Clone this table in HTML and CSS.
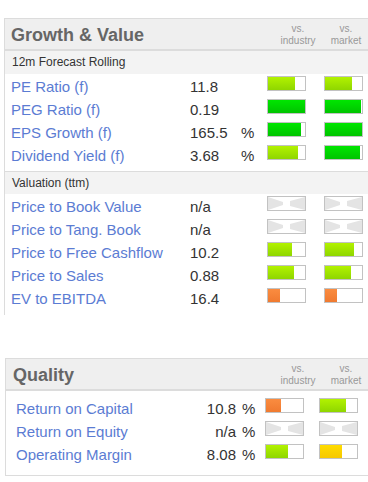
FILE: index.html
```html
<!DOCTYPE html>
<html>
<head>
<meta charset="utf-8">
<link rel="stylesheet" href="styles.css">
</head>
<body>
<div class="panel growth">
  <div class="phead">
    <h2>Growth &amp; Value</h2>
    <span class="vs">vs.<br>industry</span>
    <span class="vs">vs.<br>market</span>
  </div>
  <div class="sub sub-first">12m Forecast Rolling</div>
  <div class="rows">
    <div class="row"><span class="lbl">PE Ratio (f)</span><span class="val">11.8</span><span class="pct"></span><span class="bar"><i class="lime" style="width:73%"></i></span><span class="bar"><i class="lime" style="width:72%"></i></span></div>
    <div class="row"><span class="lbl">PEG Ratio (f)</span><span class="val">0.19</span><span class="pct"></span><span class="bar"><i class="green" style="width:100%"></i></span><span class="bar"><i class="green" style="width:98%"></i></span></div>
    <div class="row"><span class="lbl">EPS Growth (f)</span><span class="val">165.5</span><span class="pct">%</span><span class="bar"><i class="green" style="width:90%"></i></span><span class="bar"><i class="green" style="width:100%"></i></span></div>
    <div class="row"><span class="lbl">Dividend Yield (f)</span><span class="val">3.68</span><span class="pct">%</span><span class="bar"><i class="lime" style="width:81%"></i></span><span class="bar"><i class="green" style="width:94%"></i></span></div>
  </div>
  <div class="sub sub-line">Valuation (ttm)</div>
  <div class="rows">
    <div class="row"><span class="lbl">Price to Book Value</span><span class="val">n/a</span><span class="pct"></span><span class="bar na"><svg viewBox="0 0 37 13" width="37" height="13"><polygon points="0,0 15,5 15,8 0,13" /><polygon points="37,0 22,4 22,9 37,13" /></svg></span><span class="bar na"><svg viewBox="0 0 37 13" width="37" height="13"><polygon points="0,0 15,5 15,8 0,13" /><polygon points="37,0 22,4 22,9 37,13" /></svg></span></div>
    <div class="row"><span class="lbl">Price to Tang. Book</span><span class="val">n/a</span><span class="pct"></span><span class="bar na"><svg viewBox="0 0 37 13" width="37" height="13"><polygon points="0,0 15,5 15,8 0,13" /><polygon points="37,0 22,4 22,9 37,13" /></svg></span><span class="bar na"><svg viewBox="0 0 37 13" width="37" height="13"><polygon points="0,0 15,5 15,8 0,13" /><polygon points="37,0 22,4 22,9 37,13" /></svg></span></div>
    <div class="row"><span class="lbl">Price to Free Cashflow</span><span class="val">10.2</span><span class="pct"></span><span class="bar"><i class="lime" style="width:64%"></i></span><span class="bar"><i class="lime" style="width:79%"></i></span></div>
    <div class="row"><span class="lbl">Price to Sales</span><span class="val">0.88</span><span class="pct"></span><span class="bar"><i class="lime" style="width:70%"></i></span><span class="bar"><i class="lime" style="width:70%"></i></span></div>
    <div class="row"><span class="lbl">EV to EBITDA</span><span class="val">16.4</span><span class="pct"></span><span class="bar"><i class="orange" style="width:32%"></i></span><span class="bar"><i class="orange" style="width:33%"></i></span></div>
  </div>
</div>

<div class="panel quality">
  <div class="phead">
    <h2>Quality</h2>
    <span class="vs">vs.<br>industry</span>
    <span class="vs">vs.<br>market</span>
  </div>
  <div class="rows">
    <div class="row"><span class="lbl">Return on Capital</span><span class="val">10.8</span><span class="pct">%</span><span class="bar"><i class="orange" style="width:41%"></i></span><span class="bar"><i class="lime" style="width:70%"></i></span></div>
    <div class="row"><span class="lbl">Return on Equity</span><span class="val">n/a</span><span class="pct">%</span><span class="bar na"><svg viewBox="0 0 37 13" width="37" height="13"><polygon points="0,0 15,5 15,8 0,13" /><polygon points="37,0 22,4 22,9 37,13" /></svg></span><span class="bar na"><svg viewBox="0 0 37 13" width="37" height="13"><polygon points="0,0 15,5 15,8 0,13" /><polygon points="37,0 22,4 22,9 37,13" /></svg></span></div>
    <div class="row"><span class="lbl">Operating Margin</span><span class="val">8.08</span><span class="pct">%</span><span class="bar"><i class="lime" style="width:60%"></i></span><span class="bar"><i class="yellow" style="width:59%"></i></span></div>
  </div>
</div>
</body>
</html>
```
FILE: styles.css
```css
html, body {
  margin: 0;
  padding: 0;
  overflow: hidden;
  background: #fff;
}
body {
  width: 368px;
  height: 482px;
  font-family: "Liberation Sans", Arial, sans-serif;
  color: #333;
}
.panel {
  border: 1px solid #dcdcdc;
  border-right: none;
  box-sizing: content-box;
  width: 368px;
}
.growth {
  margin: 18px 0 0 4px;
  border-bottom: none;
  padding-bottom: 6px;
}
.quality {
  margin: 43px 0 0 5px;
  width: 367px;
  padding-bottom: 10px;
}
.phead {
  display: flex;
  align-items: flex-start;
  height: 30px;
  background: #efefef;
  border-bottom: 2px solid #dcdcdc;
  padding-right: 7px;
}
.phead h2 {
  flex: 1;
  margin: 0;
  font-size: 18px;
  line-height: 32px;
  font-weight: bold;
  color: #666;
  padding-left: 6px;
}
.quality .phead h2 {
  padding-left: 7px;
}
.vs {
  width: 40px;
  margin-top: 4px;
  font-size: 10px;
  line-height: 12px;
  color: #999;
  text-align: center;
}
.vs + .vs {
  margin-left: 8px;
}
.sub {
  height: 22px;
  background: #f3f3f3;
  font-size: 12px;
  line-height: 23px;
  padding-left: 7px;
  color: #333;
}
.sub-first {
  height: 23px;
}
.sub-line {
  border-top: 1px solid #dcdcdc;
}
.growth .rows + .sub {
  margin-top: 5px;
}
.rows {
  display: flex;
  flex-direction: column;
}
.row {
  display: grid;
  height: 23px;
  align-items: start;
}
.growth .row {
  grid-template-columns: 179px 51px 26px 39px 57px;
  padding-left: 6px;
}
.growth .row .bar + .bar {
  margin-left: 18px;
}
.quality .rows {
  padding-top: 5px;
}
.quality .row {
  grid-template-columns: 174px 46px 29px 39px 54px;
  padding-left: 10px;
}
.quality .row .bar + .bar {
  margin-left: 15px;
}
.lbl {
  font-size: 15px;
  line-height: 25px;
  color: #5b7cd3;
  white-space: nowrap;
}
.val, .pct {
  font-size: 15px;
  line-height: 25px;
  color: #333;
  white-space: nowrap;
}
.quality .val {
  text-align: right;
}
.quality .pct {
  padding-left: 6px;
}
.bar {
  display: block;
  width: 37px;
  height: 13px;
  margin-top: 2px;
  border: 1px solid #c2c2c2;
  background: #fff;
  position: relative;
}
.bar i {
  display: block;
  height: 100%;
}
.bar .lime {
  background: linear-gradient(#b2f200, #8fd600);
}
.bar .green {
  background: linear-gradient(#00e600, #00c400);
}
.bar .orange {
  background: linear-gradient(#fa8c40, #f07a30);
}
.bar .yellow {
  background: linear-gradient(#ffdc00, #f6c800);
}
.bar.na svg {
  display: block;
  fill: #e4e4e4;
}
```
